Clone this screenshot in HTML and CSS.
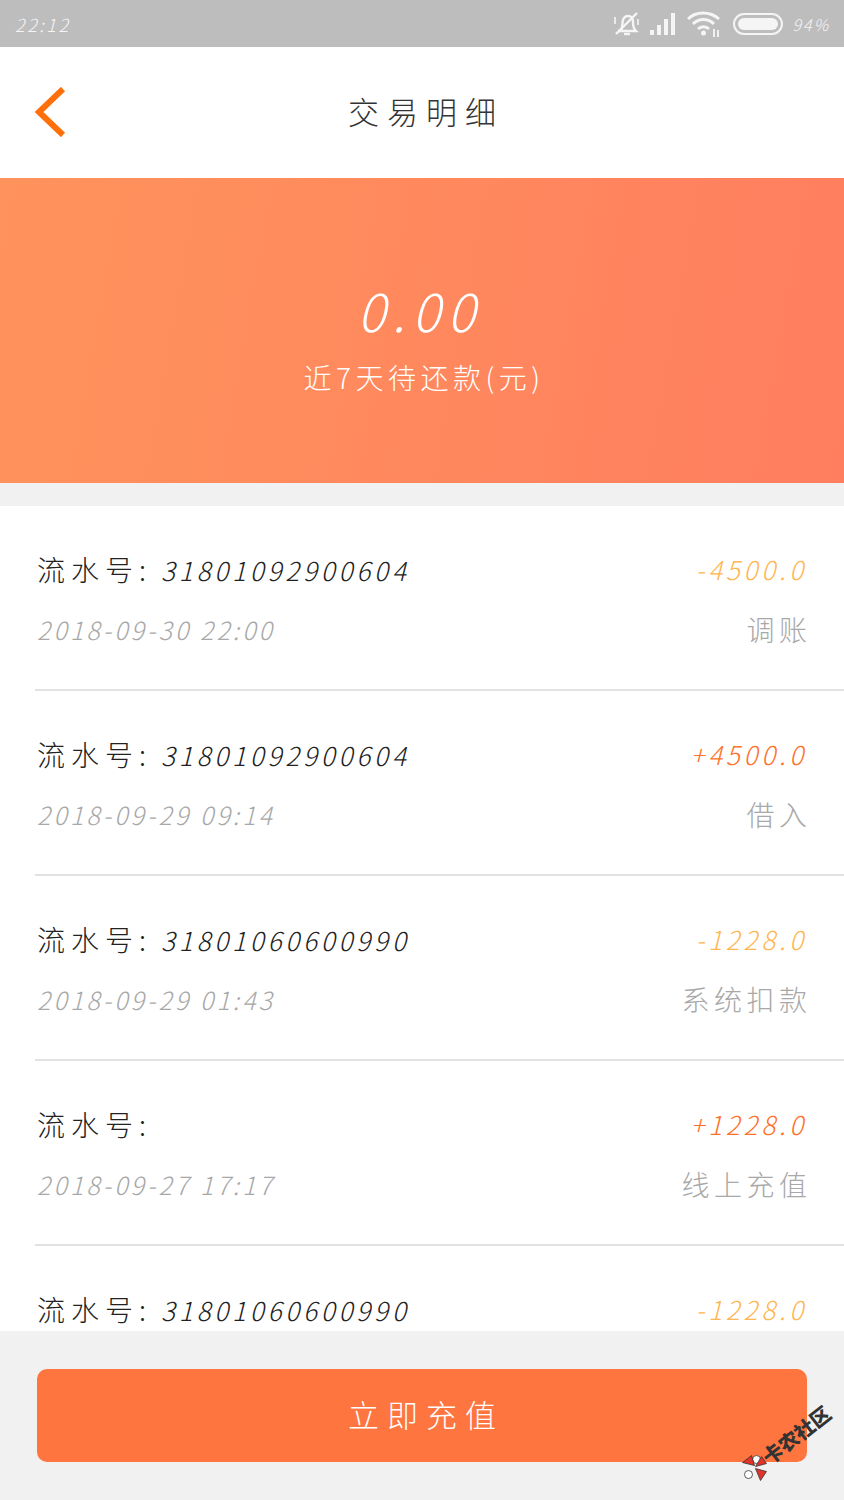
FILE: index.html
```html
<!DOCTYPE html>
<html lang="zh">
<head>
  <meta charset="UTF-8">
  <title>交易明细</title>
  <link rel="stylesheet" href="styles.css">
</head>
<body>
  <div class="page">
    <div class="status">
      <span class="status_time">22:12</span>
      <div class="status_icons">
        <svg class="ic_bell" width="28" height="26" viewBox="0 0 28 26" fill="none" stroke="#f5f5f5" stroke-width="2.4">
          <path d="M8 19 C10 16 9 12 10 9 C11 6 13 5 15 5 C19 5 20 8 20 11 C20 14 20 17 23 20 L5 20"/>
          <path d="M11 23 H17"/>
          <path d="M3 23 L24 2"/>
          <path d="M2 6 V13 M25 8 V14" stroke-width="1.6"/>
        </svg>
        <svg class="ic_signal" width="26" height="22" viewBox="0 0 26 22" fill="#f5f5f5">
          <rect x="0" y="17" width="4" height="5"/>
          <rect x="7" y="12" width="4" height="10"/>
          <rect x="14" y="6" width="4" height="16"/>
          <rect x="21" y="0" width="4" height="22"/>
        </svg>
        <svg class="ic_wifi" width="34" height="26" viewBox="0 0 34 26" fill="none" stroke="#f5f5f5" stroke-width="3">
          <path d="M1 8 C9 0 23 0 32 8"/>
          <path d="M6 13 C12 7 21 7 27 13"/>
          <path d="M11 18 C14 15 19 15 22 18"/>
          <circle cx="16.500" cy="22" r="2.500" fill="#f5f5f5" stroke="none"/>
          <path d="M27 18 V26 M31 19 V26" stroke-width="1.8"/>
        </svg>
        <div class="battery"><div class="battery_fill"></div></div>
        <span class="status_pct">94%</span>
      </div>
    </div>

    <div class="topbar">
      <svg class="back" width="32" height="50" viewBox="0 0 32 50" fill="none" stroke="#ff6f0a" stroke-width="6">
        <path d="M29 2 L5 25 L29 48" stroke-linejoin="miter"/>
      </svg>
      <h1 class="topbar_title">交易明细</h1>
    </div>

    <div class="banner">
      <div class="banner_amount">0.00</div>
      <div class="banner_label">近7天待还款(元)</div>
    </div>

    <div class="list">
      <div class="row">
        <div class="row_main">
          <span class="row_no"><span class="row_label">流水号:</span><span class="row_num">31801092900604</span></span>
          <span class="row_date">2018-09-30 22:00</span>
        </div>
        <div class="row_side">
          <span class="row_amt amt_out">-4500.0</span>
          <span class="row_type">调账</span>
        </div>
      </div>
      <div class="row">
        <div class="row_main">
          <span class="row_no"><span class="row_label">流水号:</span><span class="row_num">31801092900604</span></span>
          <span class="row_date">2018-09-29 09:14</span>
        </div>
        <div class="row_side">
          <span class="row_amt amt_in">+4500.0</span>
          <span class="row_type">借入</span>
        </div>
      </div>
      <div class="row">
        <div class="row_main">
          <span class="row_no"><span class="row_label">流水号:</span><span class="row_num">31801060600990</span></span>
          <span class="row_date">2018-09-29 01:43</span>
        </div>
        <div class="row_side">
          <span class="row_amt amt_out">-1228.0</span>
          <span class="row_type">系统扣款</span>
        </div>
      </div>
      <div class="row">
        <div class="row_main">
          <span class="row_no"><span class="row_label">流水号:</span></span>
          <span class="row_date">2018-09-27 17:17</span>
        </div>
        <div class="row_side">
          <span class="row_amt amt_in">+1228.0</span>
          <span class="row_type">线上充值</span>
        </div>
      </div>
      <div class="row">
        <div class="row_main">
          <span class="row_no"><span class="row_label">流水号:</span><span class="row_num">31801060600990</span></span>
        </div>
        <div class="row_side">
          <span class="row_amt amt_out">-1228.0</span>
        </div>
      </div>
    </div>

    <div class="footer">
      <button class="btn">立即充值</button>
    </div>

    <div class="mark">
      <svg class="mark_logo" width="26" height="28" viewBox="0 0 26 28">
        <circle cx="15" cy="6" r="4" fill="#fff" stroke="#333" stroke-width="0.800"/>
        <circle cx="7" cy="21" r="4" fill="#fff" stroke="#333" stroke-width="0.800"/>
        <path d="M1 9 L10 2 L13 12 Z M20 3 L25 10 L14 13 Z M14 15 L25 18 L19 27 Z" fill="#e2332a" stroke="#333" stroke-width="0.800"/>
      </svg>
      <span class="mark_text">卡农社区</span>
    </div>
  </div>
</body>
</html>
```

FILE: styles.css
```css
* {
  box-sizing: border-box;
}

body {
  margin: 0;
  font-family: "Noto Sans CJK SC", "Noto Sans", sans-serif;
  font-weight: 300;
}

.page {
  position: relative;
  width: 844px;
  height: 1500px;
  display: flex;
  flex-direction: column;
  overflow: hidden;
  background: #f1f1f1;
}

/* status bar */
.status {
  height: 47px;
  flex: none;
  display: flex;
  align-items: center;
  justify-content: space-between;
  padding: 0 14px 0 15px;
  background: #bdbdbd;
  color: #f5f5f5;
}

.status_time {
  font-size: 18px;
  font-style: italic;
  letter-spacing: 2.500px;
}

.status_icons {
  display: flex;
  align-items: center;
  gap: 10px;
}

.ic_signal {
  margin-left: -1px;
  margin-right: 1.500px;
}

.ic_wifi {
  margin-right: 1.500px;
}

.battery {
  width: 50px;
  height: 22px;
  padding: 3px;
  border: 2.500px solid #f5f5f5;
  border-radius: 11px;
}

.battery_fill {
  height: 100%;
  background: #f5f5f5;
  border-radius: 7px;
}

.status_pct {
  font-size: 16px;
  font-style: italic;
  letter-spacing: 2px;
}

/* top bar */
.topbar {
  position: relative;
  height: 131px;
  flex: none;
  display: flex;
  align-items: center;
  justify-content: center;
  background: #fff;
}

.back {
  position: absolute;
  left: 34px;
  top: 40px;
}

.topbar_title {
  margin: -4px 0 0;
  padding-left: 8px;
  font-size: 31px;
  font-weight: 300;
  letter-spacing: 8px;
  color: #333;
}

/* banner */
.banner {
  height: 305px;
  flex: none;
  display: flex;
  flex-direction: column;
  align-items: center;
  padding-top: 97px;
  background: linear-gradient(100deg, #ff935c, #ff7e5f);
  color: #fff;
}

.banner_amount {
  height: 70px;
  padding-right: 5px;
  font-size: 52px;
  line-height: 70px;
  font-style: italic;
  letter-spacing: 7px;
}

.banner_label {
  margin-top: 12px;
  padding-left: 4px;
  font-size: 28px;
  line-height: 40px;
  letter-spacing: 4.500px;
}

/* list */
.list {
  margin-top: 23px;
  flex: 1;
  min-height: 0;
  overflow: hidden;
  background: #fff;
}

.row {
  height: 185px;
  margin-left: 35px;
  padding: 43px 37px 0 2px;
  display: flex;
  justify-content: space-between;
  border-bottom: 2px solid #e2e2e2;
}

.row_main,
.row_side {
  display: flex;
  flex-direction: column;
  gap: 20px;
}

.row_side {
  align-items: flex-end;
}

.row_no,
.row_amt,
.row_date,
.row_type {
  height: 40px;
  line-height: 40px;
  white-space: nowrap;
}

.row_label {
  display: inline-block;
  width: 124px;
  font-size: 28px;
  letter-spacing: 6px;
  color: #222;
}

.row_num {
  font-size: 26px;
  font-style: italic;
  letter-spacing: 3.850px;
  color: #222;
}

.row_date {
  font-size: 25px;
  font-style: italic;
  letter-spacing: 3.070px;
  color: #a8a8a8;
}

.row_amt {
  font-size: 26px;
  font-style: italic;
  letter-spacing: 3.800px;
}

.amt_out {
  color: #ffb650;
}

.amt_in {
  color: #ff7128;
}

.row_type {
  margin-right: -4.500px;
  font-size: 28px;
  letter-spacing: 4.500px;
  color: #a8a8a8;
}

/* footer */
.footer {
  height: 169px;
  flex: none;
  padding: 38px 37px 0;
  background: #f1f1f1;
}

.btn {
  display: block;
  width: 100%;
  height: 93px;
  padding: 0 0 4px 8px;
  border: 0;
  border-radius: 10px;
  background: #ff753f;
  color: #fff;
  font-family: inherit;
  font-size: 31px;
  font-weight: 300;
  letter-spacing: 8px;
}

/* watermark */
.mark {
  position: absolute;
  left: 752px;
  top: 1452px;
  display: flex;
  align-items: center;
  gap: 0;
  transform: rotate(-38deg);
  transform-origin: 10px 30px;
}

.mark_logo {
  transform: rotate(38deg);
}

.mark_text {
  font-size: 20px;
  font-weight: 900;
  line-height: 24px;
  color: #333;
  white-space: nowrap;
}
```
